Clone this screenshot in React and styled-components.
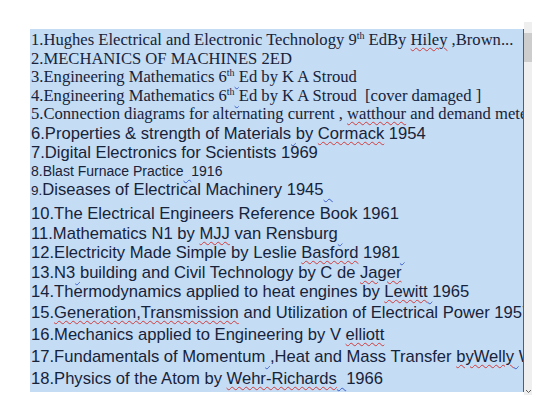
import React from "react";
import styled, { createGlobalStyle } from "styled-components";

const Global = createGlobalStyle`
  html, body { margin: 0; padding: 0; background: #ffffff; }
  body { width: 549px; height: 409px; overflow: hidden; }
`;

const Page = styled.div`
  display: flex;
  align-items: flex-start;
  padding: 22px 0 0 30px;
`;

const Doc = styled.div`
  margin-top: 7px;
  width: 494px;
  height: 363px;
  background: #c4dcf4;
  border-right: 1px solid #46607e;
  overflow: hidden;
  padding: 2px 0 0 1px;
  box-sizing: border-box;
  color: #17233a;
`;

const Scroll = styled.div`
  width: 8px;
  height: 373px;
  background: #efefef;
  display: flex;
  flex-direction: column;
  align-items: center;
  padding-top: 11px;
  box-sizing: border-box;
`;

const Thumb = styled.div`
  width: 8px;
  height: 29px;
  background: #cdcdcd;
`;

const Arrow = styled.div`
  margin-top: auto;
  margin-bottom: 1px;
  display: flex;
`;

const Line = styled.div`
  white-space: nowrap;
  font-family: ${(p) => (p.$serif ? '"Liberation Serif", "Times New Roman", serif' : '"Liberation Sans", Arial, sans-serif')};
  font-size: ${(p) => p.$size || 16.6}px;
  height: ${(p) => p.$h || 19}px;
  line-height: ${(p) => p.$h || 19}px;
`;

const Small = styled.span`
  font-size: 13.5px;
`;

const Sup = styled.sup`
  font-size: 10px;
  line-height: 0;
  vertical-align: 6px;
`;

const Red = styled.span`
  text-decoration: underline wavy #d23b3b;
  text-decoration-thickness: 1px;
  text-underline-offset: 2px;
`;

const Blue = styled.span`
  text-decoration: underline wavy #3a5bd0;
  text-decoration-thickness: 1px;
  text-underline-offset: 3px;
  white-space: pre;
`;

export default function App() {
  return (
    <>
      <Global />
      <Page>
        <Doc>
          <Line $serif $h={18.5} $size={16.6}>
            1.Hughes Electrical and Electronic Technology 9<Sup>th</Sup> EdBy <Red>Hiley</Red> ,Brown...
          </Line>
          <Line $serif $h={18.5} $size={16.6}>2.MECHANICS OF MACHINES 2ED</Line>
          <Line $serif $h={18.5} $size={16.6}>
            3.Engineering Mathematics 6<Sup>th</Sup><Blue> </Blue>Ed by K A Stroud
          </Line>
          <Line $serif $h={18.5} $size={16.6}>
            4.Engineering Mathematics 6<Sup>th</Sup><Blue> </Blue>Ed by K A Stroud&nbsp; [cover damaged ]
          </Line>
          <Line $serif $h={18.5} $size={16.6}>
            5.Connection diagrams for alternating current , <Red>watthour</Red> and demand meters
          </Line>
          <Line $h={19}>
            6.Properties &amp; strength of Materials<Blue> </Blue>by <Red>Cormack</Red> 1954
          </Line>
          <Line $h={19}>7.Digital Electronics for Scientists 1969</Line>
          <Line $h={18} $size={14}>
            8.Blast Furnace Practice<Blue>  </Blue>1916
          </Line>
          <Line $h={19}>
            <Small>9.</Small>Diseases of Electrical Machinery 1945<Blue>  </Blue>
          </Line>
          <Line $h={5.75} $size={5}>&nbsp;</Line>
          <Line $h={19.5}>10.The Electrical Engineers Reference Book 1961</Line>
          <Line $h={19.5}>
            11.Mathematics N1 by <Red>MJJ</Red> van Rensburg<Blue> </Blue>
          </Line>
          <Line $h={19.5}>
            12.Electricity Made Simple by Leslie <Red>Basford</Red> 1981<Blue> </Blue>
          </Line>
          <Line $h={19.5}>
            13.N3<Blue> </Blue>building and Civil Technology by C de <Red>Jager</Red>
          </Line>
          <Line $h={19.5}>
            14.Thermodynamics applied to heat engines by <Red>Lewitt</Red><Blue> </Blue>1965
          </Line>
          <Line $h={22}>
            15.<Red>Generation,Transmission</Red> and Utilization of Electrical Power 1957
          </Line>
          <Line $h={22}>
            16.Mechanics applied to Engineering by V <Red>elliott</Red>
          </Line>
          <Line $h={22}>
            17.Fundamentals of Momentum<Blue> </Blue>,Heat and Mass Transfer <Red>byWelly</Red><Blue> </Blue>Wicks
          </Line>
          <Line $h={22}>
            18.Physics of the Atom by <Red>Wehr-Richards</Red><Blue>  </Blue>1966
          </Line>
        </Doc>
        <Scroll>
          <Thumb />
          <Arrow>
            <svg width="7" height="5" viewBox="0 0 7 5">
              <path d="M1 1 L3.5 3.5 L6 1" stroke="#606060" strokeWidth="1" fill="none" />
            </svg>
          </Arrow>
        </Scroll>
      </Page>
    </>
  );
}
